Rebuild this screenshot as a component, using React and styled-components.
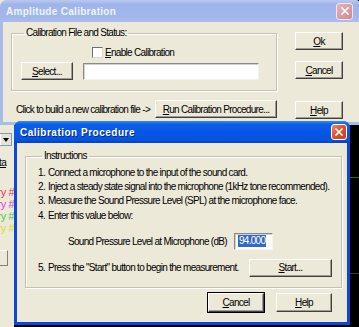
import React from "react";
import styled, { createGlobalStyle } from "styled-components";

const GlobalStyle = createGlobalStyle`
  html, body {
    margin: 0;
    padding: 0;
    background: #ece9d8;
  }
  body {
    font-family: "Liberation Sans", Arial, sans-serif;
    font-size: 10px;
    letter-spacing: -0.7px;
    color: #000;
    white-space: nowrap;
  }
`;

const Desktop = styled.div`
  position: relative;
  width: 359px;
  height: 327px;
  overflow: hidden;
  background: #ece9d8;
`;

/* ---------- application behind the dialogs ---------- */

const BackApp = styled.div`
  position: absolute;
  inset: 0;
  display: grid;
  grid-template-columns: 14px 1fr;
`;

const SidePanel = styled.div`
  background: #ece9d8;
  overflow: hidden;
  display: flex;
  flex-direction: column;
  align-items: flex-end;
  padding-top: 133px;
`;

const Combo = styled.div`
  width: 60px;
  height: 13px;
  margin-right: 2px;
  box-sizing: border-box;
  border: 1px solid #7f9db9;
  background: #fff;
  display: flex;
  justify-content: flex-end;
`;

const ComboArrow = styled.div`
  width: 10px;
  background: #e6e3d6;
  display: flex;
  align-items: center;
  justify-content: center;
  &::after {
    content: "";
    border-left: 3px solid transparent;
    border-right: 3px solid transparent;
    border-top: 4px solid #000;
  }
`;

const SideLink = styled.div`
  margin-top: 11px;
  margin-right: 8px;
  text-decoration: underline;
`;

const SeriesLabels = styled.div`
  margin-top: 18px;
  display: flex;
  flex-direction: column;
  align-items: flex-end;
`;

const Series = styled.div`
  line-height: 12px;
  font-size: 11px;
  letter-spacing: -0.5px;
  color: ${(p) => p.$color};
`;

const SideButton = styled.div`
  margin-top: 16px;
  margin-right: 6px;
  width: 40px;
  height: 16px;
  box-sizing: border-box;
  border: 1px solid;
  border-color: #fff #808080 #808080 #fff;
`;

const Chart = styled.div`
  background: #000;
  svg {
    display: block;
  }
`;

/* ---------- window chrome ---------- */

const Window = styled.div`
  position: absolute;
  left: ${(p) => p.$left}px;
  top: ${(p) => p.$top}px;
  width: ${(p) => p.$width}px;
  height: ${(p) => p.$height}px;
  display: flex;
  flex-direction: column;
  background: ${(p) => (p.$active ? "#0b47d9" : "#a9bbe9")};
  border-radius: 7px 7px 0 0;
  overflow: hidden;
`;

const TitleBar = styled.div`
  height: 22px;
  flex: none;
  display: flex;
  align-items: center;
  justify-content: space-between;
  padding: 0 ${(p) => p.$padRight}px 0 ${(p) => p.$padLeft}px;
  background: ${(p) =>
    p.$active
      ? "linear-gradient(to bottom, #3f8cf3 0%, #0a5fe8 14%, #0558e4 50%, #0654df 85%, #0342c4 100%)"
      : "linear-gradient(to bottom, #b9c9f0 0%, #9fb5ea 20%, #a2b7ea 80%, #aabdec 100%)"};
`;

const Title = styled.span`
  font-weight: bold;
  font-size: 10px;
  letter-spacing: ${(p) => (p.$active ? 0.5 : 0.3)}px;
  color: ${(p) => (p.$active ? "#fff" : "#eef2fc")};
  text-shadow: ${(p) => (p.$active ? "1px 1px 0 #0a2a8a" : "none")};
`;

const CloseButton = styled.div`
  width: ${(p) => p.$size}px;
  height: ${(p) => p.$size}px;
  box-sizing: border-box;
  border: 1px solid ${(p) => (p.$active ? "#fff" : "#f2e6ea")};
  border-radius: 3px;
  background: ${(p) =>
    p.$active
      ? "linear-gradient(135deg, #f08a6c 0%, #e0522e 45%, #c8401e 100%)"
      : "linear-gradient(135deg, #e3b6bb 0%, #d69aa0 60%, #cc8a92 100%)"};
  display: flex;
  align-items: center;
  justify-content: center;
  svg {
    display: block;
  }
`;

const Body = styled.div`
  flex: 1;
  margin: 0 3px 3px;
  background: #ece9d8;
  display: flex;
  padding: ${(p) => p.$pad};
  box-sizing: border-box;
`;

/* ---------- controls ---------- */

const Button = styled.div`
  width: ${(p) => p.$width}px;
  height: ${(p) => p.$height || 18}px;
  box-sizing: border-box;
  display: flex;
  align-items: center;
  justify-content: center;
  background: #ece9d8;
  border: 1px solid;
  border-color: #fff #404040 #404040 #fff;
  box-shadow: inset -1px -1px 0 #a09d90;
  outline: ${(p) => (p.$default ? "1px solid #000" : "none")};
  margin-top: ${(p) => p.$mt || 0}px;
  flex: none;
`;

const GroupBox = styled.fieldset`
  margin: 0;
  border: 1px solid #c3c1b3;
  box-shadow: inset 1px 1px 0 #fff, 1px 1px 0 #fff;
  padding: ${(p) => p.$pad};
  min-width: 0;
  legend {
    padding: 0 2px;
    margin-left: ${(p) => p.$legendOffset}px;
    line-height: 12px;
  }
`;

const CheckRow = styled.div`
  display: flex;
  align-items: center;
  gap: 2px;
  padding-left: 71px;
  height: 13px;
`;

const CheckBox = styled.div`
  width: 11px;
  height: 11px;
  box-sizing: border-box;
  background: #fff;
  border: 1px solid;
  border-color: #6f6f6f #d8d8d8 #d8d8d8 #6f6f6f;
`;

const FieldRow = styled.div`
  display: flex;
  align-items: center;
  gap: 10px;
  margin-top: 3px;
`;

const TextField = styled.div`
  width: ${(p) => p.$width}px;
  height: 17px;
  box-sizing: border-box;
  background: #fff;
  border: 1px solid;
  border-color: #8a8a8a #f4f4f4 #f4f4f4 #8a8a8a;
  box-shadow: inset 1px 1px 0 #d4d0c8;
  display: flex;
  align-items: center;
  padding-left: 3px;
  flex: none;
`;

const Selected = styled.span`
  background: #316ac5;
  color: #fff;
  line-height: 12px;
  padding: 0 1px;
`;

/* ---------- Amplitude Calibration window ---------- */

const LeftColumn = styled.div`
  width: 266px;
  display: flex;
  flex-direction: column;
`;

const RightColumn = styled.div`
  margin-left: 18px;
  padding-top: 5px;
  display: flex;
  flex-direction: column;
`;

const BuildRow = styled.div`
  display: flex;
  align-items: center;
  justify-content: space-between;
  margin-top: 9px;
  padding-left: 5px;
`;

/* ---------- Calibration Procedure dialog ---------- */

const DialogColumn = styled.div`
  flex: 1;
  display: flex;
  flex-direction: column;
`;

const Steps = styled.div`
  display: grid;
  grid-template-columns: 10px 1fr;
  grid-auto-rows: 14.4px;
  align-items: center;
`;

const SplRow = styled.div`
  display: flex;
  align-items: center;
  gap: 7px;
  padding-left: 30px;
  margin-top: 10px;
`;

const StartRow = styled.div`
  display: flex;
  align-items: center;
  justify-content: space-between;
  margin-top: 9px;
`;

const StepLine = styled.div`
  display: flex;
`;

const StepNum = styled.span`
  width: 10px;
`;

const DialogButtons = styled.div`
  display: flex;
  justify-content: flex-end;
  gap: 12px;
  margin-top: 5px;
  padding-right: 10px;
`;

const CloseX = ({ size }) => (
  <svg width={size} height={size} viewBox="0 0 10 10">
    <path d="M2 2 L8 8 M8 2 L2 8" stroke="#fff" strokeWidth="1.7" strokeLinecap="square" />
  </svg>
);

const steps = [
  "Connect a microphone to the input of the sound card.",
  "Inject a steady state signal into the microphone (1kHz tone recommended).",
  "Measure the Sound Pressure Level (SPL) at the microphone face.",
  "Enter this value below:",
];

const series = [
  ["Primary #", "#f2365a"],
  ["Secondary #", "#d845e0"],
  ["Tertiary #", "#4cc94c"],
  ["Quaternary #", "#dede2a"],
];

export default function App() {
  return (
    <Desktop>
      <GlobalStyle />

      <BackApp>
        <SidePanel>
          <Combo>
            <ComboArrow />
          </Combo>
          <SideLink>Data</SideLink>
          <SeriesLabels>
            {series.map(([label, color]) => (
              <Series key={label} $color={color}>
                {label}
              </Series>
            ))}
          </SeriesLabels>
          <SideButton />
        </SidePanel>
        <Chart>
          <svg width="345" height="327">
            <line x1="0" y1="177.5" x2="345" y2="177.5" stroke="#1f6b1f" />
            <line x1="0" y1="273.5" x2="345" y2="273.5" stroke="#3a3a3a" />
          </svg>
        </Chart>
      </BackApp>

      <Window $left={0} $top={0} $width={362} $height={125}>
        <TitleBar $padLeft={6} $padRight={9}>
          <Title>Amplitude Calibration</Title>
          <CloseButton $size={17}>
            <CloseX size={10} />
          </CloseButton>
        </TitleBar>
        <Body $pad="5px 0 0 8px">
          <LeftColumn>
            <GroupBox $pad="7px 0 10px 9px" $legendOffset={3}>
              <legend>Calibration File and Status:</legend>
              <CheckRow>
                <CheckBox />
                <span>
                  <u>E</u>nable Calibration
                </span>
              </CheckRow>
              <FieldRow>
                <Button $width={52}>
                  <u>S</u>elect...
                </Button>
                <TextField $width={176} />
              </FieldRow>
            </GroupBox>
            <BuildRow>
              <span>Click to build a new calibration file -&gt;</span>
              <Button $width={122}>
                <u>R</u>un Calibration Procedure...
              </Button>
            </BuildRow>
          </LeftColumn>
          <RightColumn>
            <Button $width={48}>
              <u>O</u>k
            </Button>
            <Button $width={48} $mt={11}>
              <u>C</u>ancel
            </Button>
            <Button $width={48} $mt={22}>
              <u>H</u>elp
            </Button>
          </RightColumn>
        </Body>
      </Window>

      <Window $left={14} $top={121} $width={336} $height={204} $active>
        <TitleBar $active $padLeft={6} $padRight={3}>
          <Title $active>Calibration Procedure</Title>
          <CloseButton $active $size={16}>
            <CloseX size={10} />
          </CloseButton>
        </TitleBar>
        <Body $pad="7px 5px 0 8px">
          <DialogColumn>
            <GroupBox $pad="3px 9px 10px 12px" $legendOffset={4}>
              <legend>Instructions</legend>
              <Steps>
                {steps.map((text, i) => (
                  <React.Fragment key={i}>
                    <span>{i + 1}.</span>
                    <span>{text}</span>
                  </React.Fragment>
                ))}
              </Steps>
              <SplRow>
                <span>Sound Pressure Level at Microphone (dB)</span>
                <TextField $width={39}>
                  <Selected>94.000</Selected>
                </TextField>
              </SplRow>
              <StartRow>
                <StepLine>
                  <StepNum>5.</StepNum>
                  <span>Press the "Start" button to begin the measurement.</span>
                </StepLine>
                <Button $width={83}>
                  <u>S</u>tart...
                </Button>
              </StartRow>
            </GroupBox>
            <DialogButtons>
              <Button $width={56} $height={19} $default>
                <u>C</u>ancel
              </Button>
              <Button $width={56} $height={19}>
                <u>H</u>elp
              </Button>
            </DialogButtons>
          </DialogColumn>
        </Body>
      </Window>
    </Desktop>
  );
}
